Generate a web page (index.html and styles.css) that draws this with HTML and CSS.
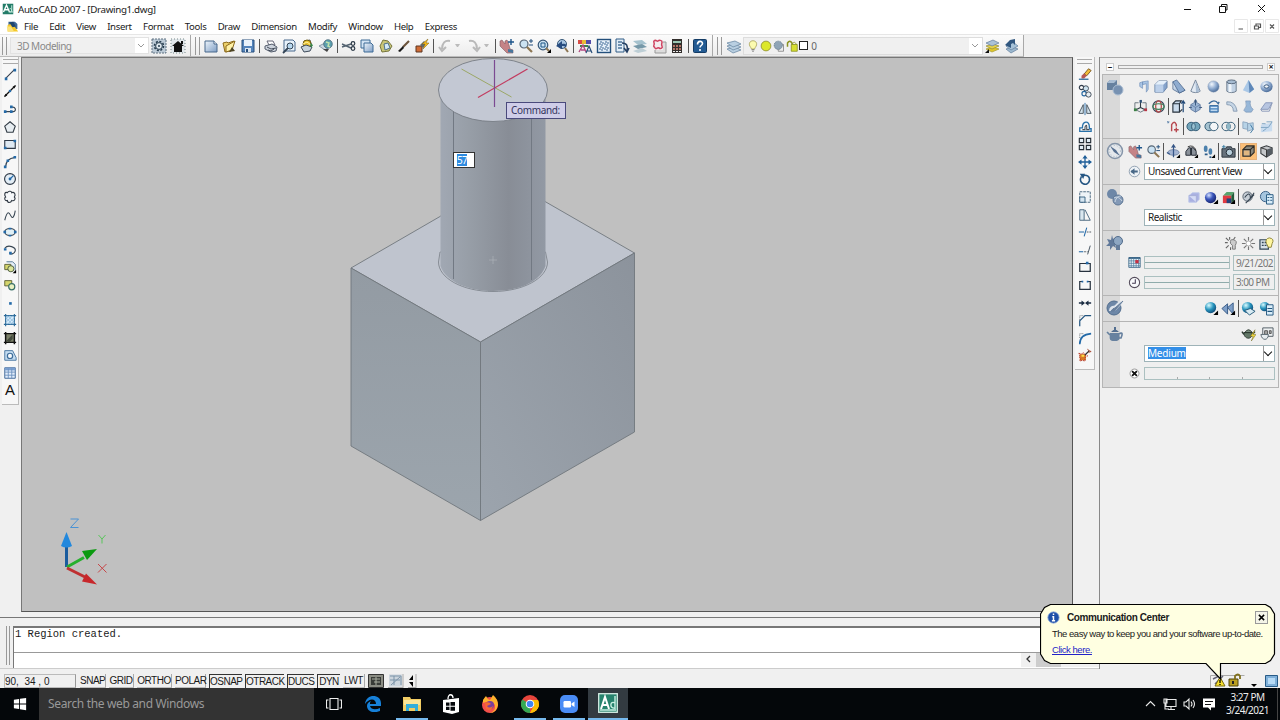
FILE: index.html
```
<!DOCTYPE html>
<html lang="en">
<head>
  <meta charset="UTF-8">
  <meta name="viewport" content="width=device-width, initial-scale=1.0">
  <title>AutoCAD 2007 - [Drawing1.dwg]</title>
  <link rel="stylesheet" href="styles.css">
</head>
<body>

  <!-- icon sprite -->
  <svg class="sprite" xmlns="http://www.w3.org/2000/svg">
    <defs>
      <linearGradient id="g-blue" x1="0" y1="0" x2="1" y2="1"><stop offset="0" stop-color="#eef5fc"/><stop offset="1" stop-color="#7d9dc4"/></linearGradient>
      <radialGradient id="g-ball" cx=".35" cy=".3" r=".8"><stop offset="0" stop-color="#f2f7fd"/><stop offset=".5" stop-color="#8fabd0"/><stop offset="1" stop-color="#3d5f8d"/></radialGradient>
      <radialGradient id="g-deep" cx=".35" cy=".3" r=".8"><stop offset="0" stop-color="#d5e2ff"/><stop offset=".45" stop-color="#3a55bb"/><stop offset="1" stop-color="#101c60"/></radialGradient>
      <radialGradient id="g-cyan" cx=".35" cy=".3" r=".8"><stop offset="0" stop-color="#d8fbff"/><stop offset=".5" stop-color="#2694bd"/><stop offset="1" stop-color="#0d3e6c"/></radialGradient>

      <symbol id="acad" viewBox="0 0 16 16"><rect x="1" y="1" width="14" height="14" fill="#237c68"/><path d="M2 12 6 3l4 9M4 9h5" fill="none" stroke="#fff" stroke-width="1.8"/><path d="M10 8c3-2 4 3 1 4M13 3v9M9 12h6" fill="none" stroke="#c5eddf" stroke-width="1.3"/></symbol>
      <symbol id="dwg" viewBox="0 0 16 16"><path d="M3 2h8l3 3v6H3z" fill="#3e6796"/><path d="m2 6 6-2 3 5 4 5H2z" fill="#f4c82b"/><path d="m4 3 5-1 3 6-4 1z" fill="#1f456f"/><path d="M1 8h5l4 6H2z" fill="#fbe37c"/></symbol>
      <symbol id="gear" viewBox="0 0 16 16"><rect x="1" y="1" width="14" height="14" fill="#bccad6" stroke="#5e7180" stroke-dasharray="2 1"/><circle cx="8" cy="8" r="4.5" fill="none" stroke="#263c4e" stroke-width="1.6" stroke-dasharray="2 1.5"/><circle cx="8" cy="8" r="3.4" fill="#dfe8ee" stroke="#263c4e"/><circle cx="8" cy="8" r="1" fill="#263c4e"/></symbol>
      <symbol id="home" viewBox="0 0 16 16"><rect x="1" y="1" width="14" height="14" fill="#e1e7eb" stroke="#788" stroke-dasharray="1 2"/><path d="m2 8 6-5 6 5h-2v6H4V8z" fill="#111"/><path d="M11 3h2v3h-2z" fill="#111"/></symbol>
      <symbol id="new" viewBox="0 0 16 16"><path d="M2 3h9l3 3v8H2z" fill="url(#g-blue)" stroke="#48688c"/><path d="M11 3v3h3" fill="#fff" stroke="#48688c"/></symbol>
      <symbol id="open" viewBox="0 0 16 16"><path d="m2 5 4-1 1 1 6-2-3 10-6 1z" fill="#ecd06a" stroke="#8c6a1c"/><path d="m5 8 9-5-3 9-6 2z" fill="#fff1a6" stroke="#8c6a1c"/><path d="m8 14 6-1-3-4z" fill="#4d4423"/></symbol>
      <symbol id="save" viewBox="0 0 16 16"><path d="M2 2h12v12H2z" fill="#5484bb" stroke="#274e7c"/><path d="M4 2h8v6H4z" fill="#e8f1fa"/><path d="M5 10h6v4H5z" fill="#dae5f0"/><path d="M6 11h2v3H6z" fill="#274e7c"/></symbol>
      <symbol id="print" viewBox="0 0 16 16"><path d="M4 3h6l2 4H6z" fill="#fff" stroke="#667"/><path d="m2 8 7-2 5 3-1 4-5 1-6-3z" fill="#cdd3dc" stroke="#545d6c"/><path d="m4 9 4 2 5-1M5 12l3 1 3-2" fill="none" stroke="#434c5a"/></symbol>
      <symbol id="preview" viewBox="0 0 16 16"><path d="M3 2h9l2 2v9H3z" fill="#e8f2fb" stroke="#48688c"/><circle cx="9" cy="8" r="3" fill="#b8d8ef" stroke="#345"/><path d="m7 10-5 5" stroke="#345" stroke-width="1.8"/></symbol>
      <symbol id="publish" viewBox="0 0 16 16"><path d="m5 3 6-1 2 6-6 3z" fill="#fff" stroke="#555"/><circle cx="8" cy="6" r="4" fill="#e8c12d" stroke="#735f15"/><path d="m4 6 4-2 4 3" fill="none" stroke="#fff3a8"/><path d="m2 9 5-2 6 2-2 4-6 1z" fill="#c8d3dc" stroke="#3e4b5b"/><path d="m11 5 3 2-2 3z" fill="#35884d"/></symbol>
      <symbol id="globe3" viewBox="0 0 16 16"><path d="m1 8 8-4 5 3-7 5z" fill="#cbd7e2" stroke="#8899a5"/><circle cx="10" cy="6" r="4.3" fill="#5c9fae" stroke="#3d5d70" stroke-width=".7"/><path d="m8 4 3 1-1 3 2 1" stroke="#bfe2ad" stroke-width="1.5" fill="none"/><path d="m5 11 4 3 2-3" fill="#444"/></symbol>
      <symbol id="cut" viewBox="0 0 16 16"><path d="M1 6l9 4M1 9l9-3" stroke="#536270" stroke-width="1.4"/><circle cx="12" cy="5.500" r="1.800" fill="none" stroke="#2b3947" stroke-width="1.2"/><circle cx="12" cy="10.500" r="1.800" fill="none" stroke="#2b3947" stroke-width="1.2"/></symbol>
      <symbol id="copy" viewBox="0 0 16 16"><path d="M2 2h9v8H2z" fill="#d3e4f5" stroke="#3d6b96"/><path d="M5 5h7l2 2v7H5z" fill="url(#g-blue)" stroke="#3d6b96"/></symbol>
      <symbol id="paste" viewBox="0 0 16 16"><path d="m5 2 5 1 4 5-3 5-7 1-2-6z" fill="#c9c576" stroke="#77763c"/><path d="m6 6 4-1 2 5-5 2z" fill="#d4eaf8" stroke="#50718b"/></symbol>
      <symbol id="brush" viewBox="0 0 16 16"><path d="m13 3-6 6" stroke="#6b543c" stroke-width="2.2"/><path d="m7 8 1 2-4 4-2-1z" fill="#181818"/></symbol>
      <symbol id="bolt" viewBox="0 0 16 16"><path d="M2 8h6v6H2z" fill="#d06c36" stroke="#5c3723"/><path d="m6 7 4-4 3 3-4 4z" fill="#62686d"/><path d="m14 1-6 5h3l-2 5 6-6h-3z" fill="#f6b918" stroke="#79601a" stroke-width=".5"/></symbol>
      <symbol id="undo" viewBox="0 0 16 16"><path d="M13 3C8 2 5 5 5 11M2 9l3 4 4-4" fill="none" stroke="#b9b9b9" stroke-width="2"/></symbol>
      <symbol id="redo" viewBox="0 0 16 16"><path d="M3 3c5-1 8 2 8 8m3-2-3 4-4-4" fill="none" stroke="#b9b9b9" stroke-width="2"/></symbol>
      <symbol id="pan" viewBox="0 0 16 16"><path d="M1 3 3 2l3 4V3l2-1 2 5 1 4 3 1v3H8l-4-4-3-3z" fill="#c58386" stroke="#80575e" stroke-width=".6"/><path d="m9 11 5 1v3l-5-1z" fill="#47779d"/><path d="M12 1v6M9 4h6" stroke="#1e558a" stroke-width="1.4"/></symbol>
      <symbol id="zoomrt" viewBox="0 0 16 16"><circle cx="6" cy="6" r="4" fill="#cbe2f2" stroke="#556575" stroke-width="1.2"/><path d="m9 9 5 5" stroke="#8c7653" stroke-width="2.2"/><path d="M13 1v4M11 3h4M11 7h4" stroke="#234f7d"/></symbol>
      <symbol id="zoomwin" viewBox="0 0 16 16"><circle cx="7" cy="7" r="4.800" fill="#cbe2f2" stroke="#365677" stroke-width="1.2"/><path d="M5 5h4v4H5z" fill="none" stroke="#1d5687"/><path d="m10 10 3 3" stroke="#8c7653" stroke-width="2"/><path d="M15 11v4h-4z" fill="#000"/></symbol>
      <symbol id="zoomprev" viewBox="0 0 16 16"><circle cx="8" cy="6" r="4.5" fill="#a9c6e2" stroke="#365677"/><path d="m11 10 3 4" stroke="#8c7653" stroke-width="2"/><path d="M2 8 8 3v3c4-1 5 1 4 4-1-2-2-2-4-2v3z" fill="#274c80"/></symbol>
      <symbol id="props" viewBox="0 0 16 16"><path d="M1 2h4v4H1z" fill="#d84c45"/><path d="M5 2h4v4H5z" fill="#e9bd36"/><path d="M9 2h5v4H9z" fill="#544caa"/><path d="M3 8h8" stroke="#398248" stroke-width="2"/><path d="m2 14 4-7 3 7m-5-2h4" fill="none" stroke="#b24b82" stroke-width="1.4"/><path d="m9 15 3-7 3 7m-5-2h4" fill="none" stroke="#284d78" stroke-width="1.2"/></symbol>
      <symbol id="center" viewBox="0 0 16 16"><rect x="1.5" y="1.5" width="13" height="13" fill="#e8f2fb" stroke="#24507c" stroke-width="1.4"/><path d="M4 4h3v3H4zM9 4h3v3H9zM4 9h3v3H4zM9 9h3v3H9z" fill="none" stroke="#3a6693" stroke-dasharray="2 1"/></symbol>
      <symbol id="palette" viewBox="0 0 16 16"><path d="M2 1h8v13H2z" fill="#e3eef8" stroke="#315c86"/><path d="M4 4h4M4 7h4M4 10h4" stroke="#4d759b" stroke-width="1.6"/><path d="M8 5c5 0 6 3 5 8M10 10l3 4 2-4" fill="none" stroke="#243f62" stroke-width="1.6"/></symbol>
      <symbol id="sheets" viewBox="0 0 16 16"><path d="m1 3 9-1 5 4-9 1z" fill="#a6c2ce"/><path d="m1 8 9-2 5 3-9 2z" fill="#7698a8"/><path d="m1 13 9-3 5 3-9 2z" fill="#bdced5"/></symbol>
      <symbol id="markup" viewBox="0 0 16 16"><path d="M4 4h11v11H4z" fill="#ddd" stroke="#999"/><path d="M2 2h10v10H2z" fill="#f4ebee"/><path d="M3 3c2-2 3 1 4 0s4-1 4 1-1 2 0 4-1 3-3 2-3 2-4 0-2-1-1-3-1-3 0-4" fill="none" stroke="#ce4360" stroke-width="1.5"/></symbol>
      <symbol id="calc" viewBox="0 0 16 16"><rect x="3" y="1" width="10" height="14" fill="#332f2d"/><path d="M4 3h8v2H4z" fill="#9cc7b3"/><path d="M4 8h8M4 11h8" stroke="#dd8a78" stroke-width="1.5" stroke-dasharray="2 1"/><path d="M4 13.5h8" stroke="#eee" stroke-dasharray="2 1"/></symbol>
      <symbol id="help" viewBox="0 0 16 16"><rect x="1.500" y="1.500" width="13" height="13" rx="1" fill="#235b93" stroke="#153c65"/><path d="M5.500 6.500c0-4 5-4 5-1 0 2-2.500 2-2.500 4m0 1.500v2" fill="none" stroke="#fff" stroke-width="1.600"/></symbol>
      <symbol id="layers" viewBox="0 0 16 16"><g fill="#b9cfe1" stroke="#6f8ba6" stroke-width=".8"><path d="m1 11 8-2 6 3-8 3z"/><path d="m1 8 8-2 6 3-8 3z"/><path d="m1 5 8-2 6 3-8 3z"/></g></symbol>
      <symbol id="layermake" viewBox="0 0 16 16"><path d="m2 11 7-2 6 2-7 3z" fill="#dfc52a" stroke="#a39932" stroke-width=".7"/><path d="m2 8 7-2 6 2-7 3z" fill="#e6d24a" stroke="#8f8a3a" stroke-width=".7"/><path d="m2 5 7-3 6 3-7 3z" fill="#aac1d7" stroke="#617d9c" stroke-width=".7"/><path d="m1 15 4-4v4z" fill="#111"/></symbol>
      <symbol id="layerprev" viewBox="0 0 16 16"><path d="m3 11 7-2 5 2-7 4z" fill="#9cb9cf" stroke="#617d9c" stroke-width=".7"/><path d="m3 8 7-4 5 4-7 4z" fill="#a6c2d8" stroke="#617d9c" stroke-width=".7"/><path d="m2 7 5-5 5-1v6l-2-2-2 1v4z" fill="#31577f"/></symbol>
      <symbol id="bulb" viewBox="0 0 16 16"><path d="M5 10C1 5 4 1 8 1s7 4 3 9l-1 2H6z" fill="#fcfbb0" stroke="#a19b50"/><path d="M6 13h4M7 15h2" stroke="#555"/></symbol>
      <symbol id="sun" viewBox="0 0 16 16"><circle cx="8" cy="8" r="6.500" fill="#dce72b" stroke="#858428"/></symbol>
      <symbol id="freeze" viewBox="0 0 16 16"><path d="M7 6h7v9H7z" fill="#eee" stroke="#777"/><circle cx="7" cy="7" r="5.500" fill="#8fa4b6" stroke="#5e7487" stroke-dasharray="2 1"/></symbol>
      <symbol id="lock" viewBox="0 0 16 16"><path d="M2 9V4q3-5 6 0v2" fill="none" stroke="#8b9321" stroke-width="2"/><path d="M7 6h8v9H7z" fill="#d7df31" stroke="#818a18"/><path d="M8 6q3-6 6 0" fill="none" stroke="#8b9321"/></symbol>

      <!-- draw -->
      <symbol id="line" viewBox="0 0 16 16"><path d="M3 13 13 3" stroke="#333d4c" stroke-width="1.3"/><path d="M2 12h3v3H2zM12 2h3v3h-3z" fill="#246aa8"/></symbol>
      <symbol id="xline" viewBox="0 0 16 16"><path d="M2 14 14 2" stroke="#111" stroke-width="1.4"/><path d="m1 15 2-4 2 2zM15 1l-2 4-2-2z" fill="#111"/><circle cx="8" cy="8" r="1.5" fill="#246aa8"/></symbol>
      <symbol id="pline" viewBox="0 0 16 16"><path d="M3 11h9c4-1 2-6-2-5" fill="none" stroke="#384653" stroke-width="1.3"/><path d="M1 9.500h3v3H1zM8 9.500h3v3H8zM8 4h3v3H8z" fill="#246aa8"/></symbol>
      <symbol id="polygon" viewBox="0 0 16 16"><path d="m8 2 6 5-2.500 7h-7L2 7z" fill="#e7edf1" stroke="#333c46" stroke-width="1.3"/></symbol>
      <symbol id="rect" viewBox="0 0 16 16"><path d="M2 4h12v9H2z" fill="#dfe9f2" stroke="#303b48" stroke-width="1.3"/><path d="M1 11h3v3H1zM12 3h3v3h-3z" fill="#246aa8"/></symbol>
      <symbol id="arc" viewBox="0 0 16 16"><path d="M3 13Q4 4 13 3" fill="none" stroke="#384653" stroke-width="1.3"/><path d="M1 12h3v3H1zM4 5h3v3H4zM12 1h3v3h-3z" fill="#246aa8"/></symbol>
      <symbol id="circle" viewBox="0 0 16 16"><circle cx="8" cy="8" r="6.200" fill="#e3edf5" stroke="#303b48" stroke-width="1.3"/><path d="m8 8 4-4" stroke="#246aa8" stroke-width="1.3"/><circle cx="8" cy="8" r="1.600" fill="#246aa8"/></symbol>
      <symbol id="cloud" viewBox="0 0 16 16"><path d="M5 3c2-3 5-1 5 0 3-1 5 2 3 5 2 2 0 5-3 4-1 3-5 3-5 0-3 1-4-3-2-4-2-3-1-6 2-5z" fill="#f6f8fa" stroke="#333c46" stroke-width="1.3"/></symbol>
      <symbol id="spline" viewBox="0 0 16 16"><path d="M2 14C5 2 7 5 9 9s4 1 5-6" fill="none" stroke="#384653" stroke-width="1.2"/></symbol>
      <symbol id="ellipse" viewBox="0 0 16 16"><ellipse cx="8" cy="8" rx="6" ry="4" fill="#e1f0f6" stroke="#333c46" stroke-width="1.3"/><path d="M.5 6.500h3v3h-3zM12.500 6.500h3v3h-3zM6.500 3h3v2h-3zM6.500 11h3v2h-3z" fill="#246aa8"/></symbol>
      <symbol id="earc" viewBox="0 0 16 16"><path d="M2 6c4-5 13-1 12 3-1 4-6 4-6 3" fill="none" stroke="#384653" stroke-width="1.3"/><path d="M1 6h3v2.500H1zM7 10h3v3H7z" fill="#246aa8"/></symbol>
      <symbol id="insblock" viewBox="0 0 16 16"><path d="M4 2h7l3 3v7" fill="#e4eef7" stroke="#4d718e"/><path d="M2 5h7v6H2z" fill="#d5d66e" stroke="#575a2f"/><circle cx="9" cy="10" r="3.500" fill="#dbe59a" stroke="#425236"/><path d="M15 11v4h-4z" fill="#000"/></symbol>
      <symbol id="mkblock" viewBox="0 0 16 16"><path d="M2 3h8v6H2z" fill="#d5d66e" stroke="#575a2f"/><circle cx="10" cy="10" r="3.500" fill="#eaf1c2" stroke="#386f67" stroke-width="1.3"/></symbol>
      <symbol id="point" viewBox="0 0 16 16"><path d="M7 7h3v3H7z" fill="#246aa8"/></symbol>
      <symbol id="hatch" viewBox="0 0 16 16"><path d="M3 3h10v10H3z" fill="#d7ecfb"/><path d="M3 1v14M13 1v14M1 3h14M1 13h14" stroke="#2d6b9a" stroke-width="1.300"/><path d="M3 7l4-4M3 11l8-8M5 13l8-8M9 13l4-4M5 3l8 8M3 5l8 8" stroke="#7fb0d5" stroke-width=".8"/></symbol>
      <symbol id="gradient" viewBox="0 0 16 16"><path d="M3 3h10v10H3z" fill="#7b8069"/><path d="M3 1v14M13 1v14M1 3h14M1 13h14" stroke="#111" stroke-width="1.700"/><path d="m4 11 7-7v5l-4 4z" fill="#444b3d"/></symbol>
      <symbol id="region" viewBox="0 0 16 16"><path d="M2 3h9l4 8v3H2z" fill="#c4dcf0" stroke="#3e6e9b"/><circle cx="8" cy="9" r="3" fill="#f7fafc" stroke="#3e6e9b" stroke-width="1.400"/></symbol>
      <symbol id="table" viewBox="0 0 16 16"><path d="M2 2h12v12H2z" fill="#e3eefb" stroke="#315c8f"/><path d="M2 3.500h12" stroke="#7a9fd0" stroke-width="3"/><path d="M6 3v11M10 3v11M2 7h12M2 10.500h12" stroke="#6b90bd"/></symbol>
      <symbol id="mtext" viewBox="0 0 16 16"><text x="8" y="14" text-anchor="middle" font-family="Liberation Sans, sans-serif" font-size="17" fill="#111">A</text></symbol>

      <!-- modify -->
      <symbol id="erase" viewBox="0 0 16 16"><path d="m7 8 5-6 3 2-5 6z" fill="#f2bd38" stroke="#72511c"/><path d="m4 10 3-3 3 3-3 3H4z" fill="#b95852"/><path d="M1 14h11" stroke="#326e9c" stroke-width="1.5"/></symbol>
      <symbol id="mcopy" viewBox="0 0 16 16"><circle cx="4" cy="4" r="2.500" fill="none" stroke="#333f4d" stroke-width="1.3"/><circle cx="9" cy="5" r="3" fill="#cee3ef" stroke="#333f4d"/><circle cx="7" cy="11" r="2.500" fill="none" stroke="#2467a0" stroke-width="1.3"/><circle cx="12" cy="12" r="3" fill="#e6eef3" stroke="#333f4d"/></symbol>
      <symbol id="mirror" viewBox="0 0 16 16"><path d="M6 3v10H1zM10 3v10h5z" fill="#d7e6ef" stroke="#3d4a56"/><path d="M8 1v14" stroke="#246aa8"/></symbol>
      <symbol id="offset" viewBox="0 0 16 16"><path d="M2 13V9h3c0-8 8-9 8-1v2h2v3z" fill="none" stroke="#2871a9" stroke-width="1.5"/><path d="M5 11h3V8q2-4 2 0v3h3" fill="none" stroke="#424e58" stroke-width="1.2"/></symbol>
      <symbol id="array" viewBox="0 0 16 16"><path d="M1.500 1.500h5v5h-5zM9.500 1.500h5v5h-5zM1.500 9.500h5v5h-5zM9.500 9.500h5v5h-5z" fill="#e3eef6" stroke="#222b34" stroke-width="1.3"/></symbol>
      <symbol id="move" viewBox="0 0 16 16"><path d="M8 2v12M2 8h12" stroke="#205f99" stroke-width="1.5"/><path d="m8 0 3 4H5zM8 16l3-4H5zM0 8l4-3v6zM16 8l-4-3v6z" fill="#205f99"/></symbol>
      <symbol id="rotate" viewBox="0 0 16 16"><path d="M4 5c-5 8 7 13 9 5 1-5-3-7-7-6" fill="none" stroke="#245582" stroke-width="1.8"/><path d="M2 2h6L6 8z" fill="#245582"/></symbol>
      <symbol id="scale" viewBox="0 0 16 16"><path d="M2 2h12v12H2z" fill="#eef3f7" stroke="#3b5b76" stroke-dasharray="3 1"/><path d="M2 8h6v6H2z" fill="#d5e5f0" stroke="#2e597a"/></symbol>
      <symbol id="stretch" viewBox="0 0 16 16"><path d="M2 2h5v12H2z" fill="#dae7ef" stroke="#3b5b76"/><path d="m8 2 6 12H7" fill="none" stroke="#3b5b76"/></symbol>
      <symbol id="trim" viewBox="0 0 16 16"><path d="M1 8h6M10 3 7 13" stroke="#246aa8" stroke-width="1.2"/><path d="M10 8h5" stroke="#404953" stroke-dasharray="2 1"/></symbol>
      <symbol id="extend" viewBox="0 0 16 16"><path d="M1 10h5" stroke="#246aa8" stroke-width="1.2"/><path d="M7 10h4" stroke="#404953" stroke-dasharray="2 1"/><path d="m14 3-3 10" stroke="#334250"/></symbol>
      <symbol id="breakpt" viewBox="0 0 16 16"><path d="M2 4h12v9H2z" fill="#f6f6f6" stroke="#27323f" stroke-width="1.4"/><path d="M9 2h3v3H9z" fill="#246aa8"/></symbol>
      <symbol id="break" viewBox="0 0 16 16"><path d="M5 4H2v9h12V4h-3" fill="none" stroke="#27323f" stroke-width="1.4"/><path d="M4 3h2v2H4zM10 3h2v2h-2z" fill="#246aa8"/></symbol>
      <symbol id="join" viewBox="0 0 16 16"><path d="M1 8h5M10 8h5" stroke="#1b2d43" stroke-width="1.5"/><path d="m8 8-4-3v6zM8 8l4-3v6z" fill="#1b2d43"/></symbol>
      <symbol id="chamfer" viewBox="0 0 16 16"><path d="M2 15V9l6-6h7" fill="none" stroke="#245680" stroke-width="1.4"/><path d="M2 8V3h5" fill="none" stroke="#59636c" stroke-dasharray="1 1"/></symbol>
      <symbol id="fillet" viewBox="0 0 16 16"><path d="M2 15Q2 4 15 3" fill="none" stroke="#246aa8" stroke-width="1.8"/><path d="M2 8V3h5" fill="none" stroke="#59636c" stroke-dasharray="1 1"/></symbol>
      <symbol id="explode" viewBox="0 0 16 16"><path d="M2 7h7v7H2z" fill="#d77a28"/><path d="m1 6 3 1 2-2 2 3 3 1-3 2v4l-3-1-3 1 1-3-2-2 1-1z" fill="none" stroke="#b5301f" stroke-dasharray="2 1"/><path d="M8 8 13 3" stroke="#333" stroke-width="1.500"/><path d="m11 1 1 2 3 1-3 1" stroke="#a3442c" fill="none"/><path d="M4 8h3v2H4z" fill="#fae345"/></symbol>

      <!-- dashboard -->
      <symbol id="p-solid" viewBox="0 0 18 18"><path d="M1 5 4 2h7v7l-3 3H1z" fill="#65809f"/><path d="m1 5 3-3h7L8 5z" fill="#a9bdd3"/><circle cx="12" cy="12" r="5" fill="#7791b1" stroke="#a9bcd2"/></symbol>
      <symbol id="p-nav" viewBox="0 0 18 18"><circle cx="9" cy="9" r="7.500" fill="#e4e8ec" stroke="#8494a8" stroke-width="1.500"/><circle cx="9" cy="9" r="5.500" fill="none" stroke="#acb8c6" stroke-dasharray="1 2"/><path d="m4 4 6 4 4 6-6-4z" fill="#566f90"/></symbol>
      <symbol id="p-style" viewBox="0 0 18 18"><circle cx="6" cy="6" r="5" fill="#6d87a7"/><circle cx="12" cy="12" r="5" fill="#8399b6" stroke="#5c7594"/><path d="M8 10c3-2 6 0 8 3M9 14c1-5 4-6 6-6" fill="none" stroke="#cdd9e5"/></symbol>
      <symbol id="p-light" viewBox="0 0 18 18"><path d="m6 1 1 4 4-2-2 4 3 2-3 1 1 4-3-2-3 4V12L0 12l3-3-2-4 4 1z" fill="#61799a"/><circle cx="12" cy="7" r="4.500" fill="#8da6c2" stroke="#526c8c"/><path d="M10 11h4v5h-4z" fill="#647c9b"/></symbol>
      <symbol id="p-mat" viewBox="0 0 18 18"><circle cx="8" cy="9" r="7" fill="#6d87a7" stroke="#516d8e"/><path d="M5 12q0-4 4-3l6-6" fill="none" stroke="#dce3eb" stroke-width="4"/><path d="M17 2 10 10q-2 3-5 2 2-3 4-3z" fill="#667e9c" stroke="#667e9c"/></symbol>
      <symbol id="p-render" viewBox="0 0 18 18"><path d="M4 8h9c2 8-1 8-5 8S3 15 4 8" fill="#67819f"/><path d="M5 7q4-5 8 0zM8 2h2v3H8z" fill="#536e90"/><path d="M4 10 1 7M13 9q5-3 2 4h-2" fill="none" stroke="#67819f" stroke-width="1.700"/></symbol>
      <symbol id="polysolid" viewBox="0 0 16 16"><path d="m4 4 3-1v7l-3-2zM7 3l6-1v9l-2 3V5L7 6z" fill="#a9c5e5" stroke="#7190b8" stroke-width=".700"/></symbol>
      <symbol id="box" viewBox="0 0 16 16"><path d="m2 6 4-4h9v7l-4 5H2z" fill="#86a4cc" stroke="#5a769b" stroke-width=".8"/><path d="m2 6 4-4h9l-4 4z" fill="#e5f0fb"/><path d="M2.500 6.500H11V14H2.500z" fill="#bcd0ea"/></symbol>
      <symbol id="wedge" viewBox="0 0 16 16"><path d="M2 3v8l7 4 6-3z" fill="url(#g-blue)" stroke="#4a668b" stroke-width=".8"/><path d="m2 3 4-2 9 11-6 3z" fill="#8facd0" stroke="#4a668b" stroke-width=".8"/></symbol>
      <symbol id="cone" viewBox="0 0 16 16"><path d="m8 1 5 12c-2 2-8 2-10 0z" fill="#e2eaf3" stroke="#66788e" stroke-width=".9"/><path d="m8 2 4.500 11q-2 1-4 1z" fill="#a9bdd3"/></symbol>
      <symbol id="sphere" viewBox="0 0 16 16"><circle cx="8" cy="8" r="6" fill="url(#g-ball)" stroke="#8296b2" stroke-width=".500"/></symbol>
      <symbol id="cyl" viewBox="0 0 16 16"><path d="M3 3v10c2 2 8 2 10 0V3z" fill="#c2d2e4" stroke="#5e6e81" stroke-width=".9"/><path d="M5 5h3v9H5z" fill="#eef4fa"/><ellipse cx="8" cy="3" rx="5" ry="2" fill="#a7bcd2" stroke="#4e5e71" stroke-width=".9"/></symbol>
      <symbol id="pyramid" viewBox="0 0 16 16"><path d="m8 1-6 11 7 3 5-4z" fill="#aac8e7"/><path d="m8 1 1 14 5-4z" fill="#5e87b8"/></symbol>
      <symbol id="torus" viewBox="0 0 16 16"><ellipse cx="8" cy="8" rx="6.500" ry="6" fill="url(#g-ball)"/><ellipse cx="8" cy="8" rx="2.500" ry="1.800" fill="#eef2f7" stroke="#38577e"/></symbol>
      <symbol id="orbitaxis" viewBox="0 0 16 16"><path d="M8 2v7M8 9l-6 3M8 9l6 3" stroke="#303d48" stroke-width="1.200"/><path d="M6 4H2v7l6 3 6-3V4h-4" fill="none" stroke="#5b6872" stroke-width=".900"/><path d="M7 1h2.500v3H7z" fill="#2c5178"/><path d="M1 10h3v3H1z" fill="#3b8145"/><path d="M12 10h3v3h-3z" fill="#b73746"/></symbol>
      <symbol id="orbit3" viewBox="0 0 16 16"><circle cx="8" cy="8" r="6" fill="none" stroke="#38475c" stroke-width="1.200"/><ellipse cx="8" cy="8" rx="3" ry="6" fill="none" stroke="#bb4745" stroke-width="1.300"/><ellipse cx="8" cy="8" rx="6" ry="3" fill="none" stroke="#3e8357" stroke-width="1.200"/></symbol>
      <symbol id="extrude" viewBox="0 0 16 16"><path d="M2 5h7v9H2zM2 5l3-3h6L9 5M9 14l3-3" fill="#cbdced" stroke="#28323d" stroke-width="1.200"/><path d="M13 14V2m-2 3 2-3 2 3" fill="none" stroke="#244b79" stroke-width="1.300"/></symbol>
      <symbol id="presspull" viewBox="0 0 16 16"><path d="m3 6 5-3 5 3v5l-5 3-5-3z" fill="#9bb5d4" stroke="#6780a3"/><path d="m3 6 5 3 5-3M8 9v5" stroke="#5d7aa2" stroke-width=".8" fill="none"/><path d="M8 1v6M1 9h3M12 9h3" stroke="#36547b"/><path d="m8 0 2 3H6z" fill="#36547b"/></symbol>
      <symbol id="revolve" viewBox="0 0 16 16"><path d="M4 7h9v7H4z" fill="#669acc" stroke="#31659b"/><path d="M3 5q6-6 10 0l1-2" fill="none" stroke="#39699a" stroke-width="1.500"/><path d="M5 9h7M5 12h7" stroke="#e2f1fe"/></symbol>
      <symbol id="sweep" viewBox="0 0 16 16"><path d="M3 3q9-1 11 10h-4Q10 6 3 6z" fill="#c6d6e6" stroke="#8a9db3"/></symbol>
      <symbol id="loft" viewBox="0 0 16 16"><path d="M5 2h5q-1 6 3 9l-2 3H5l-2-2q4-4 2-10" fill="#97b7d8" stroke="#6d8aae" stroke-width=".6"/></symbol>
      <symbol id="planar" viewBox="0 0 16 16"><path d="m2 11 5-7h7l-4 7z" fill="#b7c5e0" stroke="#8797bb"/><path d="m2 11 1 2h8l3-9" fill="none" stroke="#8c9aba"/></symbol>
      <symbol id="helix" viewBox="0 0 16 16"><path d="M6 13V6q3-5 5 0v2M11 9v5M8.500 11.500h5" fill="none" stroke="#b7484f" stroke-width="1.500"/><path d="M1 2l3 1-2 2z" fill="#5b80a9"/></symbol>
      <symbol id="union" viewBox="0 0 16 16"><circle cx="5.500" cy="8" r="4.500" fill="#72a5bb" stroke="#2f5772"/><circle cx="10.500" cy="8" r="4.500" fill="#72a5bb" stroke="#2f5772"/><ellipse cx="8" cy="8" rx="2" ry="3.500" fill="#9cc3d3" stroke="#2f5772" stroke-width=".8"/></symbol>
      <symbol id="subtract" viewBox="0 0 16 16"><circle cx="5.500" cy="8" r="4.500" fill="#a5c2d0" stroke="#2f5772"/><circle cx="10.500" cy="8" r="4.500" fill="#f4f6f8" stroke="#2f5772"/></symbol>
      <symbol id="intersect" viewBox="0 0 16 16"><circle cx="5.500" cy="8" r="4.500" fill="none" stroke="#2f5772"/><circle cx="10.500" cy="8" r="4.500" fill="none" stroke="#2f5772"/><ellipse cx="8" cy="8" rx="2" ry="3.500" fill="#8fb8c8"/></symbol>
      <symbol id="slice" viewBox="0 0 16 16"><path d="m2 3 5 1v7l-5-1zM7 5l6-1v7l-6 2z" fill="#b7d3e7" stroke="#8ea7c0"/><path d="m10 6 3 5-3 4" fill="none" stroke="#417aa3"/></symbol>
      <symbol id="thicken" viewBox="0 0 16 16"><path d="m2 6 12-2v9L2 14z" fill="#c9dcef"/><path d="M2 9h8l4-6M4 13l4-3M8 3h6M3 5h4" fill="none" stroke="#7da3c1"/></symbol>
      <symbol id="orbit" viewBox="0 0 16 16"><ellipse cx="8" cy="9" rx="6" ry="3" fill="#a3b4d2" stroke="#7486a6"/><path d="M8 1v13M6 4l2-3 2 3M4 11l-3-2" fill="none" stroke="#365687" stroke-width="1.300"/><path d="M15 11v4h-4z"/></symbol>
      <symbol id="swivel" viewBox="0 0 16 16"><path d="M2 12V8l3-4h2v8zM8 4h2l3 4v4H8z" fill="#8a919a" stroke="#232a34"/><path d="M4 3q6-3 9 4" fill="none" stroke="#333"/><path d="M15 11v4h-4z"/></symbol>
      <symbol id="walk" viewBox="0 0 16 16"><ellipse cx="5" cy="5" rx="2" ry="3.500" fill="#4c81ad"/><ellipse cx="10" cy="8" rx="2" ry="3.500" fill="#4c81ad"/><path d="M4 10h3v2H4zM9 13h2v2H9z" fill="#2b5b89"/><path d="M15 11v4h-4z"/></symbol>
      <symbol id="camera" viewBox="0 0 16 16"><path d="M1 5h4l1-2h5l1 2h3v9H1z" fill="#66717c" stroke="#28313a"/><circle cx="9" cy="9" r="3.500" fill="#b8cedb" stroke="#1e2932"/><path d="M3 1v4M1 3h4" stroke="#32799f"/></symbol>
      <symbol id="parallel" viewBox="0 0 16 16"><path d="M2 6h8v7H2zM2 6l4-4h8v7l-4 4M10 6l4-4" fill="#87857b" stroke="#302d27" stroke-width="1.200"/><path d="M3 7h6v5H3z" fill="#e0b680"/></symbol>
      <symbol id="persp" viewBox="0 0 16 16"><path d="m2 4 6-2 6 2v6l-6 4-6-4z" fill="#c4c7ca" stroke="#34383c" stroke-width="1.100"/><path d="m8 6 6-2v6l-6 4z" fill="#555c63"/><path d="m2 4 6 2v8" fill="none" stroke="#333"/></symbol>
      <symbol id="back" viewBox="0 0 16 16"><circle cx="8" cy="8" r="6.500" fill="#eef2f6" stroke="#8093a5"/><path d="M4 8h8" stroke="#496887" stroke-width="2.500"/><path d="m3 8 5-4v8z" fill="#496887"/></symbol>
      <symbol id="xray" viewBox="0 0 16 16"><path d="m3 6 4-3h7v7l-3 3H3z" fill="#a9b0e1" stroke="#bcc7ea"/><path d="M3 6h8v7" fill="#d5dcf5" stroke="#a6afd6"/></symbol>
      <symbol id="realball" viewBox="0 0 16 16"><circle cx="7" cy="8" r="6" fill="url(#g-deep)"/><path d="M15 10v5h-5z"/></symbol>
      <symbol id="facecol" viewBox="0 0 16 16"><path d="m2 6 4-4h8l-3 4z" fill="#56a36d"/><path d="M2 6h9v8H2z" fill="#df3941"/><path d="m11 6 3-4v9l-3 3z" fill="#215b38"/><path d="M6 9h5v5H6z" fill="#23437a"/><path d="M15 10v5h-5z"/></symbol>
      <symbol id="edges" viewBox="0 0 16 16"><circle cx="7" cy="7" r="5" fill="#c5cdd5" stroke="#535e6b"/><path d="M4 8q6-8 6 1L14 3M5 14l9-9" fill="none" stroke="#34424f" stroke-width="1.200"/></symbol>
      <symbol id="vsman" viewBox="0 0 16 16"><circle cx="7" cy="7" r="5.500" fill="#a5c5de" stroke="#365d83"/><path d="M8 5h7v10H8z" fill="#d9edf9" stroke="#24587f"/><path d="M9 8h5M9 11h5" stroke="#24587f" stroke-dasharray="2 1"/></symbol>
      <symbol id="lightoff" viewBox="0 0 16 16"><path d="m2 2 3 3M6 1v3M1 7h3M2 13l3-3M7 12v3M12 1l-2 3" stroke="#666" stroke-width="1.200"/><path d="M7 8q-1-5 3-4 5 1 2 6v4H9v-4z" fill="#ccc" stroke="#777"/></symbol>
      <symbol id="sunoff" viewBox="0 0 16 16"><path d="M8 1v4M8 11v4M1 8h4M11 8h4M3 3l3 3M10 10l3 3M13 3l-3 3M6 10l-3 3" stroke="#777" stroke-width="1.200"/><circle cx="8" cy="8" r="2.500" fill="#fff" stroke="#bbb"/></symbol>
      <symbol id="lightlist" viewBox="0 0 16 16"><path d="M1 4h9v10H1z" fill="#d9e2e8" stroke="#334655" stroke-width="1.300"/><path d="M3 7h5M3 10h5" stroke="#334655" stroke-width="1.500" stroke-dasharray="2 1"/><path d="M8 8q-2-5 3-6 6 1 3 6l-1 4h-3z" fill="#fff6a0" stroke="#8d8235"/></symbol>
      <symbol id="calendar" viewBox="0 0 16 16"><path d="M1 2h14v12H1z" fill="#eef6fb" stroke="#315e80"/><path d="M1 2.500h14" stroke="#315e80" stroke-width="2"/><path d="M4 2v12M7 2v12M10 2v12M13 2v12M1 6h14M1 9h14M1 12h14" stroke="#4d7c9e" stroke-width=".9"/><path d="M9 5h4v4H9z" fill="#c72e40"/></symbol>
      <symbol id="clock" viewBox="0 0 16 16"><circle cx="8" cy="8" r="6.300" fill="#f8f9fb" stroke="#554d5c" stroke-width="1.300"/><path d="M9 4v5H5" fill="none" stroke="#443b52" stroke-width="1.300"/></symbol>
      <symbol id="matball" viewBox="0 0 16 16"><circle cx="7" cy="7" r="6" fill="url(#g-cyan)"/><path d="M15 10v5h-5z"/></symbol>
      <symbol id="matmap" viewBox="0 0 16 16"><path d="m1 8 6-5v11zM7 7l6-5v12z" fill="#7e9fc8" stroke="#375a85"/><path d="M15 10v5h-5z"/></symbol>
      <symbol id="matlayer" viewBox="0 0 16 16"><circle cx="7" cy="7" r="6" fill="url(#g-cyan)"/><path d="m4 10 6-2 5 3-6 4z" fill="#d8ebf3" stroke="#255a7b"/></symbol>
      <symbol id="matlist" viewBox="0 0 16 16"><circle cx="6" cy="6" r="5" fill="url(#g-cyan)"/><path d="M8 4h7v11H8z" fill="#d9edf9" stroke="#24587f"/><path d="M9 8h5M9 11h5" stroke="#24587f" stroke-width="1.300"/></symbol>
      <symbol id="teapot" viewBox="0 0 16 16"><path d="M3 7h9c1 8-9 8-9 0" fill="#627767" stroke="#29352d"/><path d="M4 7q4-6 8 0z" fill="#7b8f80" stroke="#29352d"/><path d="M3 9 1 6M12 9l3-3" fill="none" stroke="#29352d" stroke-width="1.500"/><path d="m15 4-5 7h3l-2 5 5-7h-3z" fill="#f4db3c" stroke="#6c621e" stroke-width=".500"/></symbol>
      <symbol id="rframe" viewBox="0 0 16 16"><path d="M4 2h11v9H4z" fill="#edf0f1" stroke="#515b63"/><path d="M6 5h3v4H6zM11 5h2v3h-2z" stroke="#555" fill="#aaa"/><path d="M2 9h8c0 7-7 7-8 0" fill="#e8edf0" stroke="#596771"/></symbol>
      <symbol id="stop" viewBox="0 0 16 16"><circle cx="8" cy="8" r="5.500" fill="#fff" stroke="#888"/><path d="m5 5 6 6M11 5l-6 6" stroke="#111" stroke-width="2.200"/></symbol>

      <symbol id="info" viewBox="0 0 16 16"><circle cx="8" cy="8" r="7" fill="#1e50a8" stroke="#9ab4df"/><path d="M8 3v2M6.500 7H8v5M6 12h4" stroke="#fff" stroke-width="1.800" fill="none"/></symbol>

      <!-- taskbar -->
      <symbol id="win" viewBox="0 0 16 16"><path d="m1 3.200 6-1v5.300H1zM8 2l7-1v6.500H8zM1 8.500h6v5.300l-6-1zM8 8.500h7V15l-7-1z" fill="#fff"/></symbol>
      <symbol id="taskview" viewBox="0 0 16 16"><path d="M4 2.500h8v11H4zM2.500 4H.5v8h2M13.500 4h2v8h-2" fill="none" stroke="#eee" stroke-width="1.100"/></symbol>
      <symbol id="edge" viewBox="0 0 16 16"><path d="M0 8C1-3 16-2 16 7v3H5c1 4 6 4 10 2v3C8 18 2 15 2 10c0-3 2-4 4-5-1 1-1 2-1 3h6c0-6-7-6-11 0z" fill="#1680d8"/></symbol>
      <symbol id="folder" viewBox="0 0 18 16"><path d="M0 1h7l1 2h10v12H0z" fill="#f2cd64"/><path d="M1 4h16v5H1z" fill="#fbe59a"/><path d="M3 8h12v7h-3v-3H6v3H3z" fill="#34aedb"/></symbol>
      <symbol id="store" viewBox="0 0 18 20"><path d="M1 6l16-2v14l-7 2-9-2z" fill="#fff"/><path d="M6 5c0-6 5-5 5-1" fill="none" stroke="#fff" stroke-width="1.300"/><path d="M4 8.500h3.500v3.300H4zM8.500 8h4.500v3.800H8.500zM4 12.800h3.500V16H4zM8.500 12.800h4.500v4H8.500z" fill="#05080c"/></symbol>
      <symbol id="firefox" viewBox="0 0 18 18"><circle cx="9" cy="10" r="8" fill="#f3504a"/><path d="M2 5q2-3 3-4 1 3 4 4l3-5q5 4 5 10-2 8-8 8 6-2 5-8Q10 4 2 8z" fill="#ffb22d"/><circle cx="9" cy="10" r="4" fill="#7b3f9e"/><path d="M4 8q4-2 6 1l-4 2q2 3 6 0-2 6-7 3" fill="#f56a35"/></symbol>
      <symbol id="chrome" viewBox="0 0 18 18"><circle cx="9" cy="9" r="9" fill="#e8453c"/><path d="M9 9 1.200 4.500A9 9 0 0 0 9 18z" fill="#35a853"/><path d="M9 9h9a9 9 0 0 1-9 9l4-7z" fill="#fbbd05"/><path d="M9 5h8a9 9 0 0 1-8 13l4-7z" fill="#fbbd05"/><circle cx="9" cy="9" r="4.300" fill="#fff"/><circle cx="9" cy="9" r="3.300" fill="#4285f4"/></symbol>
      <symbol id="zoomapp" viewBox="0 0 18 18"><rect width="18" height="18" rx="5" fill="#4a8cf5"/><rect x="3.500" y="6" width="7.500" height="6.500" rx="1.200" fill="#fff"/><path d="m11.500 8.500 3-2v5.500l-3-2z" fill="#fff"/></symbol>
      <symbol id="acadbig" viewBox="0 0 20 20"><rect x=".7" y=".7" width="18.600" height="18.600" fill="#26836d" stroke="#d6eee5" stroke-width="1.300"/><path d="m3 16 4-12 4 12M5 12h5" fill="none" stroke="#fff" stroke-width="2"/><path d="M17 3v13M17 10c-5-3-6 6 0 5M2 17h16" fill="none" stroke="#c9efe2" stroke-width="1.400"/></symbol>
    </defs>
  </svg>

  <div class="titlebar">
    <svg class="app-icon"><use href="#acad"/></svg>
    <span class="title">AutoCAD 2007 - [Drawing1.dwg]</span>
    <svg class="win-buttons" viewBox="0 0 100 18"><path d="M4 9.500h7M39.500 6.500h6v6h-6zM41.500 6V4.500H47V10h-1.500M78 5l7 7M85 5l-7 7" fill="none" stroke="#111"/></svg>
  </div>

  <div class="menubar">
    <svg class="doc-icon"><use href="#dwg"/></svg>
    <nav class="menu">
      <span>File</span><span>Edit</span><span>View</span><span>Insert</span><span>Format</span><span>Tools</span><span>Draw</span><span>Dimension</span><span>Modify</span><span>Window</span><span>Help</span><span>Express</span>
    </nav>
    <svg class="mdi-buttons" viewBox="0 0 46 14"><path d="M.5.500h13v13H.5zM16.500.500h13v13h-13zM31.500.500h13v13h-13z" fill="#fff" stroke="#e8e8e8"/><path d="M4.500 10h4.500M20.500 7h4v3h-4zM22 6.500V5h4.500v3.500H25M36 5.500l4 4M40 5.500l-4 4" fill="none" stroke="#555" stroke-width="1.200"/></svg>
  </div>

  <!-- toolbars under the menu -->
  <div class="toolbars">
    <div class="bar bar-workspace">
      <i class="grip"></i>
      <div class="ws-select"><span>3D Modeling</span><svg class="chev" viewBox="0 0 8 6"><path d="m1 1 3 3 3-3" fill="none" stroke="#999"/></svg></div>
      <svg class="ico"><use href="#gear"/></svg><svg class="ico"><use href="#home"/></svg>
    </div>
    <div class="bar bar-standard">
      <i class="grip"></i>
      <svg class="ico"><use href="#new"/></svg><svg class="ico"><use href="#open"/></svg><svg class="ico"><use href="#save"/></svg>
      <i class="sep"></i>
      <svg class="ico"><use href="#print"/></svg><svg class="ico"><use href="#preview"/></svg><svg class="ico"><use href="#publish"/></svg><svg class="ico"><use href="#globe3"/></svg>
      <i class="sep"></i>
      <svg class="ico"><use href="#cut"/></svg><svg class="ico"><use href="#copy"/></svg><svg class="ico"><use href="#paste"/></svg><svg class="ico"><use href="#brush"/></svg><svg class="ico"><use href="#bolt"/></svg>
      <i class="sep"></i>
      <svg class="ico"><use href="#undo"/></svg><i class="drop"></i><svg class="ico"><use href="#redo"/></svg><i class="drop"></i>
      <i class="sep"></i>
      <svg class="ico"><use href="#pan"/></svg><svg class="ico"><use href="#zoomrt"/></svg><svg class="ico"><use href="#zoomwin"/></svg><svg class="ico"><use href="#zoomprev"/></svg>
      <i class="sep"></i>
      <svg class="ico"><use href="#props"/></svg><svg class="ico"><use href="#center"/></svg><svg class="ico"><use href="#palette"/></svg><svg class="ico"><use href="#sheets"/></svg><svg class="ico"><use href="#markup"/></svg><svg class="ico"><use href="#calc"/></svg>
      <i class="sep"></i>
      <svg class="ico"><use href="#help"/></svg>
    </div>
    <div class="bar bar-layers">
      <i class="grip"></i>
      <svg class="ico"><use href="#layers"/></svg>
      <div class="layer-select">
        <svg><use href="#bulb"/></svg><svg><use href="#sun"/></svg><svg><use href="#freeze"/></svg><svg><use href="#lock"/></svg><i class="swatch"></i><span>0</span>
        <svg class="chev" viewBox="0 0 8 6"><path d="m1 1 3 3 3-3" fill="none" stroke="#999"/></svg>
      </div>
      <svg class="ico"><use href="#layermake"/></svg><svg class="ico"><use href="#layerprev"/></svg>
    </div>
  </div>

  <div class="workspace">
    <div class="left">
      <div class="stage">
        <div class="vbar vbar-draw">
          <i class="vgrip"></i>
          <svg><use href="#line"/></svg><svg><use href="#xline"/></svg><svg><use href="#pline"/></svg><svg><use href="#polygon"/></svg><svg><use href="#rect"/></svg><svg><use href="#arc"/></svg><svg><use href="#circle"/></svg><svg><use href="#cloud"/></svg><svg><use href="#spline"/></svg><svg><use href="#ellipse"/></svg><svg><use href="#earc"/></svg><svg><use href="#insblock"/></svg><svg><use href="#mkblock"/></svg><svg><use href="#point"/></svg><svg><use href="#hatch"/></svg><svg><use href="#gradient"/></svg><svg><use href="#region"/></svg><svg><use href="#table"/></svg><svg><use href="#mtext"/></svg>
        </div>

        <!-- model space -->
        <div class="viewport">
          <svg class="model" viewBox="22 58 1050 553">
            <defs>
              <linearGradient id="body" x1="0" x2="1"><stop offset="0" stop-color="#a1a8b3"/><stop offset=".25" stop-color="#989fa8"/><stop offset=".65" stop-color="#888d96"/><stop offset="1" stop-color="#9299a4"/></linearGradient>
              <linearGradient id="faceL" x1="0" y1="0" x2="0" y2="1"><stop offset="0" stop-color="#939ba3"/><stop offset="1" stop-color="#9ca5ad"/></linearGradient>
              <linearGradient id="faceR" x1="0" y1="1" x2="1" y2="0"><stop offset="0" stop-color="#9ca4ad"/><stop offset="1" stop-color="#8c939c"/></linearGradient>
            </defs>
            <g stroke="#71777d" stroke-width=".9" stroke-linejoin="round">
              <path d="M351 268 440 216.500 493 172 545 201.500 634.500 253 480.500 342z" fill="#bfc4ce"/>
              <path d="M351 268 480.500 342V520.500L351 446z" fill="url(#faceL)"/>
              <path d="M634.500 253 480.500 342V520.500L634.500 432z" fill="url(#faceR)"/>
            </g>
            <path d="M438.500 262c0 16 24 29.500 54.500 29.500s54.500-13.500 54.500-29.500l-2-10H440z" fill="#bfc4ce" stroke="#777d85" stroke-width=".8"/>
            <path d="M440.500 92v174c5 15 27 25 52.500 25s47-9 52.500-25V92z" fill="url(#body)"/>
            <path d="M453.500 110v169M531.500 112v168" stroke="#727983"/>
            <path d="M489 260h8M493 256v8" stroke="#b2b7be" stroke-width=".6"/>
            <ellipse cx="493" cy="90" rx="54.500" ry="31.500" fill="#c3c8d3" stroke="#777d85" stroke-width=".9"/>
            <path d="M461.500 69 511.500 97" stroke="#9ba766"/>
            <path d="M527.500 69 478 97.500" stroke="#c23c60" stroke-width="1.200"/>
            <path d="M494.500 60v47" stroke="#7c4a92" stroke-width="1.200"/>

            <!-- UCS icon -->
            <path d="M66.500 567V545" stroke="#1a5c9e" stroke-width="3"/><path d="M66.500 532 61 546q5.500 3 11 0z" fill="#2288dd"/>
            <path d="M67 567 84 557.500" stroke="#27b02e" stroke-width="3"/><path d="m97 549-15 2 5 9z" fill="#0b9a10"/>
            <path d="M67 568 85 577" stroke="#bf2f31" stroke-width="3"/><path d="m97 584.500-15-3 4-8z" fill="#c7272b"/>
            <path d="M70.500 519h8l-8 8.500h8" fill="none" stroke="#4a92d4"/>
            <path d="m98.500 535 3.500 4 3.500-4M102 539v4.500" fill="none" stroke="#58c55a"/>
            <path d="m98 564 8.500 8.500M106.500 564 98 572.500" fill="none" stroke="#c64648"/>
          </svg>
          <div class="tip">Command:</div>
          <div class="dyn-input"><span>57</span></div>
        </div>

        <div class="vbar vbar-modify">
          <i class="vgrip"></i>
          <svg><use href="#erase"/></svg><svg><use href="#mcopy"/></svg><svg><use href="#mirror"/></svg><svg><use href="#offset"/></svg><svg><use href="#array"/></svg><svg><use href="#move"/></svg><svg><use href="#rotate"/></svg><svg><use href="#scale"/></svg><svg><use href="#stretch"/></svg><svg><use href="#trim"/></svg><svg><use href="#extend"/></svg><svg><use href="#breakpt"/></svg><svg><use href="#break"/></svg><svg><use href="#join"/></svg><svg><use href="#chamfer"/></svg><svg><use href="#fillet"/></svg><svg><use href="#explode"/></svg>
        </div>
      </div>

      <div class="command">
        <i class="grip"></i>
        <div class="cmd-box">
          <div class="cmd-history">1 Region created.</div>
          <div class="cmd-line"><svg class="cmd-scroll" viewBox="0 0 78 14"><path d="M15 0h63v14H15z" fill="#cdcdcd"/><path d="M0 0h15v14H0zM40 0h38v14H40z" fill="#f0f0f0"/><path d="M9 3 6 6l3 3" fill="none" stroke="#333" stroke-width="1.300"/></svg></div>
        </div>
      </div>
    </div>

    <div class="dashboard">
      <div class="dash-head"><b>&#8211;</b><i></i><b>&#215;</b></div>
      <div class="panels">
        <section class="panel panel-make">
          <svg class="p-icon"><use href="#p-solid"/></svg>
          <div class="row"><svg><use href="#polysolid"/></svg><svg><use href="#box"/></svg><svg><use href="#wedge"/></svg><svg><use href="#cone"/></svg><svg><use href="#sphere"/></svg><svg><use href="#cyl"/></svg><svg><use href="#pyramid"/></svg><svg><use href="#torus"/></svg></div>
          <div class="row"><svg><use href="#orbitaxis"/></svg><svg><use href="#orbit3"/></svg><i></i><svg><use href="#extrude"/></svg><svg><use href="#presspull"/></svg><svg><use href="#revolve"/></svg><svg><use href="#sweep"/></svg><svg><use href="#loft"/></svg><svg><use href="#planar"/></svg></div>
          <div class="row"><svg><use href="#helix"/></svg><i></i><svg><use href="#union"/></svg><svg><use href="#subtract"/></svg><svg><use href="#intersect"/></svg><i></i><svg><use href="#slice"/></svg><svg><use href="#thicken"/></svg></div>
        </section>
        <section class="panel panel-nav">
          <svg class="p-icon"><use href="#p-nav"/></svg>
          <div class="row"><svg><use href="#pan"/></svg><svg><use href="#zoomrt"/></svg><i></i><svg><use href="#orbit"/></svg><svg><use href="#swivel"/></svg><svg><use href="#walk"/></svg><i></i><svg><use href="#camera"/></svg><i></i><svg class="on"><use href="#parallel"/></svg><svg><use href="#persp"/></svg></div>
          <div class="row field"><svg><use href="#back"/></svg><div class="combo"><span>Unsaved Current View</span></div></div>
        </section>
        <section class="panel panel-style">
          <svg class="p-icon"><use href="#p-style"/></svg>
          <div class="row"><svg><use href="#xray"/></svg><svg><use href="#realball"/></svg><svg><use href="#facecol"/></svg><i></i><svg><use href="#edges"/></svg><svg><use href="#vsman"/></svg></div>
          <div class="row field"><div class="combo"><span>Realistic</span></div></div>
        </section>
        <section class="panel panel-light">
          <svg class="p-icon"><use href="#p-light"/></svg>
          <div class="row"><svg><use href="#lightoff"/></svg><svg><use href="#sunoff"/></svg><svg><use href="#lightlist"/></svg></div>
          <div class="row field"><svg><use href="#calendar"/></svg><div class="slider"></div><div class="value">9/21/202</div></div>
          <div class="row field"><svg><use href="#clock"/></svg><div class="slider"></div><div class="value">3:00 PM</div></div>
        </section>
        <section class="panel panel-mat">
          <svg class="p-icon"><use href="#p-mat"/></svg>
          <div class="row"><svg><use href="#matball"/></svg><svg><use href="#matmap"/></svg><i></i><svg><use href="#matlayer"/></svg><svg><use href="#matlist"/></svg></div>
        </section>
        <section class="panel panel-render">
          <svg class="p-icon"><use href="#p-render"/></svg>
          <div class="row"><svg><use href="#teapot"/></svg><svg><use href="#rframe"/></svg></div>
          <div class="row field"><div class="combo"><span class="picked">Medium</span></div></div>
          <div class="row field"><svg><use href="#stop"/></svg><div class="progress"><i></i><i></i><i></i></div></div>
        </section>
      </div>
    </div>
  </div>

  <div class="status">
    <div class="coords">90,&nbsp; 34 , 0</div>
    <div class="modes">
      <span>SNAP</span><span>GRID</span><span>ORTHO</span><span>POLAR</span><span class="down">OSNAP</span><span class="down">OTRACK</span><span class="down">DUCS</span><span class="down">DYN</span><span>LWT</span>
    </div>
    <svg class="status-icons" viewBox="0 0 50 16"><path d="M.5 1.500h15v13H.5z" fill="#8b8d84" stroke="#333"/><path d="M3 4h10v8H3z" fill="#393c38"/><path d="M4 6h8M6 9h6M8 4v8" stroke="#a9ada0"/><path d="M21 1.500h13v12H21z" fill="#ccd5dd"/><path d="M22 3h11v9M23 12l9-8M22 7h10M26 3v9" stroke="#7b93a8" fill="none"/><path d="M35 15V1M48 15V1M20 14.500h15M40 14.500h8" stroke="#aaa"/><path d="M41 7l4-5v5zM41 9h4v5z"/></svg>
    <svg class="status-tray" viewBox="0 0 70 18"><path d="M.5 18V3.500h34" fill="none" stroke="#aaa"/><path d="m3 7 6-3M5 12l8-8" stroke="#667" stroke-width="1.500"/><path d="m10 5 5 9H5z" fill="#f6de2d" stroke="#776a14"/><path d="M10 8v3M10 12v1" stroke="#000" stroke-width="1.300"/><path d="M19 7h9v7h-9z" fill="#ba9e20" stroke="#4d420c"/><path d="M25 7V4q3-3 5 0v3" fill="none" stroke="#80701d" stroke-width="1.800"/><path d="M23 9v3" stroke="#222" stroke-width="2"/><path d="M41 12h6l-3 3z"/><path d="M55.500 3.500h12v11h-12z" fill="#7fb0d9" stroke="#275b87"/><path d="M58 6h7v6h-7z" fill="#b7dbf6"/></svg>
  </div>

  <div class="taskbar">
    <div class="start"><svg><use href="#win"/></svg></div>
    <div class="search">Search the web and Windows</div>
    <div class="apps">
      <div class="task"><svg class="i16"><use href="#taskview"/></svg></div>
      <div class="task"><svg class="i16"><use href="#edge"/></svg></div>
      <div class="task open"><svg class="i18"><use href="#folder"/></svg></div>
      <div class="task"><svg class="i20"><use href="#store"/></svg></div>
      <div class="task"><svg class="i18"><use href="#firefox"/></svg></div>
      <div class="task open"><svg class="i18"><use href="#chrome"/></svg></div>
      <div class="task open"><svg class="i18"><use href="#zoomapp"/></svg></div>
      <div class="task active"><svg class="i20"><use href="#acadbig"/></svg></div>
    </div>
    <svg class="tray" viewBox="0 0 75 20"><g fill="none" stroke="#e8e8e8" stroke-width="1.100"><path d="m3 12 4.500-4.500L12 12M23 5.500h10v7H23zM21 5h3v4h-3zM22 9v6h4M28 13v2M25 15.500h7M41 8h2l3-3v10l-3-3h-2zM48 7.500q2 2.500 0 5M50 6q3 4 0 8"/></g><path d="M60 4.500h12v9h-4v3l-3-3h-5z" fill="#fff"/><path d="M62 7.500h8M62 10.500h6" stroke="#111"/></svg>
    <div class="clock"><span>3:27 PM</span><span>3/24/2021</span></div>
  </div>

  <!-- notification balloon -->
  <div class="balloon">
    <svg class="balloon-shape" viewBox="0 0 236 80"><path d="M10.500.5h215l5 3 4 6.500v40l-4 6.500-5 3H180.500V75L166 59.500H10.500l-6-3-4-6.500V10l4-6.500z" fill="#ffffe1" stroke="#000" stroke-width="1.200"/></svg>
    <div class="balloon-body">
      <div class="balloon-head"><svg><use href="#info"/></svg><strong>Communication Center</strong><span class="balloon-close"><svg viewBox="0 0 8 8"><path d="m1 1 6 6M7 1 1 7" stroke="#000" stroke-width="1.700"/></svg></span></div>
      <p>The easy way to keep you and your software up-to-date.</p>
      <a>Click here.</a>
    </div>
  </div>

</body>
</html>
```
FILE: styles.css
```
* {
  box-sizing: border-box;
}

html, body {
  margin: 0;
  padding: 0;
}

body {
  position: relative;
  width: 1280px;
  height: 720px;
  overflow: hidden;
  display: flex;
  flex-direction: column;
  background: #f0f0f0;
  font-family: "Noto Sans", "Open Sans", sans-serif;
  font-size: 10px;
  color: #1a1a1a;
  white-space: nowrap;
}

svg {
  display: block;
  flex: none;
}

.sprite {
  position: absolute;
  width: 0;
  height: 0;
}

/* title + menu */
.titlebar {
  height: 18px;
  display: flex;
  align-items: center;
  padding-left: 2px;
  background: #fff;
}

.app-icon {
  width: 12px;
  height: 12px;
}

.title {
  margin-left: 4px;
  font-size: 9.8px;
  letter-spacing: -0.35px;
}

.win-buttons {
  width: 100px;
  height: 18px;
  margin-left: auto;
}

.menubar {
  height: 16px;
  display: flex;
  align-items: center;
  padding-left: 6px;
  background: #fff;
}

.doc-icon {
  width: 13px;
  height: 13px;
}

.menu {
  display: flex;
  gap: 11.3px;
  margin-left: 5px;
  font-size: 9.6px;
  letter-spacing: -0.35px;
}

.mdi-buttons {
  width: 46px;
  height: 14px;
  margin-left: auto;
}

/* horizontal toolbars */
.toolbars {
  height: 23px;
  display: flex;
  border-top: 1px solid #e6e6e6;
}

.bar {
  height: 22px;
  display: flex;
  align-items: center;
  border-right: 1px solid #a8a8a8;
  border-bottom: 1px solid #bbb;
  background: linear-gradient(#fbfbfb, #ececec);
}

.bar-workspace {
  width: 191px;
  padding-left: 2px;
}

.bar-standard {
  width: 522px;
  padding-left: 4px;
}

.bar-layers {
  width: 311px;
  padding-left: 4px;
}

.grip {
  width: 5px;
  height: 18px;
  border-left: 1px solid #999;
  border-right: 1px solid #999;
  flex: none;
}

.ico {
  width: 16px;
  height: 16px;
  margin: 0 1.2px;
}

.bar-standard .grip + .ico {
  margin-left: 3px;
}

.bar-layers .grip + .ico {
  margin-left: 4px;
}

.sep {
  width: 1px;
  height: 14px;
  margin: 0 1.8px;
  background: #555;
}

.drop {
  margin: 0 2px 0 1px;
  border: 2.5px solid transparent;
  border-top: 3px solid #bbb;
  border-bottom: 0;
  width: 5px;
}

.drop + .ico {
  margin-left: 3.5px;
}

.drop + .sep {
  margin-left: 4px;
}

.ws-select {
  width: 139px;
  height: 17px;
  margin: 0 1px 0 3px;
  padding: 0 3px 0 6px;
  display: flex;
  align-items: center;
  justify-content: space-between;
  border: 1px solid #e2e2e2;
  color: #888;
  letter-spacing: -0.5px;
  background: linear-gradient(90deg, #f0f0f0 124px, #fff 124px);
}

.chev {
  width: 8px;
  height: 6px;
}

.layer-select {
  width: 240px;
  height: 18px;
  padding: 0 2px 0 3px;
  display: flex;
  align-items: center;
  border: 1px solid #ddd;
  background: linear-gradient(90deg, #f0f0f0 225px, #fff 225px);
}

.layer-select svg {
  width: 12px;
  height: 12px;
  margin-right: 1px;
}

.layer-select .chev {
  width: 8px;
  height: 6px;
  margin-left: auto;
}

.swatch {
  width: 9px;
  height: 9px;
  border: 1px solid #222;
  background: #fff;
  margin-right: 3px;
}

.layer-select span {
  color: #666;
}

/* main area */
.workspace {
  height: 612px;
  display: flex;
}

.left {
  width: 1100px;
  display: flex;
  flex-direction: column;
  border-right: 1px solid #888;
}

.stage {
  height: 561px;
  display: flex;
  border-bottom: 1px solid #777;
}

.vbar {
  width: 17px;
  display: flex;
  flex-direction: column;
  align-items: center;
  border-right: 1px solid #bbb;
  border-bottom: 1px solid #bbb;
  background: #f7f7f7;
}

.vbar svg {
  width: 14px;
  height: 14px;
  margin: 1.8px 0;
}

.vbar-draw {
  height: 348px;
  margin-left: 2px;
}

.vbar-modify {
  width: 20px;
  height: 313px;
  margin-left: 2px;
}

.vgrip {
  width: 15px;
  height: 5px;
  margin: 2px 0 1px;
  border-top: 1px solid #aaa;
  border-bottom: 1px solid #aaa;
  flex: none;
}

.viewport {
  position: relative;
  width: 1052px;
  height: 555px;
  margin-left: 2px;
  border: 1px solid #555;
  border-left-color: #777;
  border-top: 1px solid #777;
  background: #c0c0c0;
}

.model {
  width: 1050px;
  height: 553px;
}

.tip {
  position: absolute;
  left: 484px;
  top: 44px;
  width: 60px;
  height: 17px;
  padding-left: 4px;
  border: 1px solid #4a4a7c;
  background: #cfcde8;
  color: #33335c;
  line-height: 15px;
  letter-spacing: -0.35px;
}

.dyn-input {
  position: absolute;
  left: 431px;
  top: 94px;
  width: 22px;
  height: 16px;
  padding: 1px 0 0 3px;
  border: 1px solid #333;
  background: #fff;
  line-height: 12px;
}

.dyn-input span {
  display: inline-block;
  background: #2f8be0;
  color: #fff;
  letter-spacing: -0.6px;
}

/* command window */
.command {
  flex: 1;
  display: flex;
  padding: 8px 0 0 6px;
  border-bottom: 1px solid #ccc;
}

.command .grip {
  width: 4px;
  height: 39px;
}

.cmd-box {
  flex: 1;
  margin-left: 3px;
  border-top: 2px solid #777;
  border-left: 1px solid #777;
  background: #fff;
}

.cmd-history {
  height: 25px;
  border-bottom: 1px solid #999;
  padding-left: 1px;
  font: 10.5px/12px "Liberation Mono", monospace;
}

.cmd-scroll {
  width: 78px;
  height: 14px;
  margin-left: auto;
}

/* dashboard */
.dashboard {
  flex: 1;
  padding: 1px 1px 0 2px;
  border-top: 1px solid #aaa;
}

.dash-head {
  height: 15px;
  display: flex;
  align-items: center;
  gap: 4px;
  padding: 0 4px;
}

.dash-head b {
  width: 8px;
  height: 8px;
  background: #fff;
  border: 1px solid #ccc;
  font-size: 9px;
  line-height: 5px;
  text-align: center;
}

.dash-head i {
  flex: 1;
  height: 4px;
  border: 1px solid #aaa;
}

.panels {
  border: 1px solid #b5b5b5;
}

.panel {
  position: relative;
  display: flex;
  flex-direction: column;
  padding: 2px 3px 0 0;
  border-bottom: 1px solid #b5b5b5;
  background: linear-gradient(90deg, #d9d9d9 17px, #efefef 17px);
}

.panel:last-child {
  border-bottom: 0;
}

.panel-make { height: 64px; padding-top: 1px; }
.panel-nav { height: 46px; }
.panel-style { height: 46px; }
.panel-light { height: 65px; }
.panel-mat { height: 26px; }
.panel-render { height: 65px; padding-top: 1px; }

/* category icon overlaps the strip at the left edge */
.p-icon {
  position: absolute;
  left: 3px;
  top: 3px;
  width: 18px;
  height: 18px;
}

.row {
  height: 20px;
  display: flex;
  align-items: center;
  justify-content: flex-end;
}

.panel-light .field {
  height: 19.5px;
}

.row svg {
  width: 15px;
  height: 15px;
  margin: 0 1.3px;
}

.row > i {
  width: 1px;
  height: 17px;
  margin: 0 .7px;
  background: #555;
}

.row .on {
  background: #fbbf77;
  outline: 1px solid #e8b27a;
}

.field svg {
  width: 13px;
  height: 13px;
  margin-right: 3px;
}

.combo {
  width: 131px;
  height: 17px;
  display: flex;
  align-items: center;
  padding-left: 3px;
  border: 1px solid #9eb3b8;
  background: linear-gradient(90deg, #fff 118px, #9a9a9a 118px, #9a9a9a 119px, #fff 119px);
  letter-spacing: -0.5px;
}

.combo::after {
  content: "";
  width: 5px;
  height: 5px;
  margin: -3px 3px 0 auto;
  border: solid #111;
  border-width: 0 1.5px 1.5px 0;
  transform: rotate(45deg);
}

.picked {
  background: #338fe8;
  color: #fff;
  line-height: 12px;
  letter-spacing: -0.2px;
}

.slider {
  width: 86px;
  height: 13px;
  border: 1px solid #abc0c0;
  background: linear-gradient(transparent 5px, #8fabab 5px, #8fabab 6px, transparent 6px);
}

.value {
  width: 42px;
  height: 16px;
  margin-left: 3px;
  padding-left: 2px;
  border: 1px solid #abc0c0;
  color: #777;
  line-height: 14px;
  letter-spacing: -0.6px;
}

.progress {
  width: 131px;
  height: 13px;
  display: flex;
  align-items: flex-end;
  justify-content: space-evenly;
  border: 1px solid #abc0c0;
}

.progress i {
  width: 1px;
  height: 2px;
  background: #aaa;
}

/* status bar */
.status {
  height: 19px;
  display: flex;
  align-items: center;
  padding: 4px 0 0 4px;
  font-family: "Liberation Sans", Arial, sans-serif;
  font-size: 10px;
}

.coords {
  width: 72px;
  height: 14px;
  border: 1px solid #bbb;
  border-right-color: #999;
  line-height: 13px;
}

.modes {
  display: flex;
  gap: 3px;
  margin-left: 4px;
}

.modes span {
  height: 14px;
  line-height: 14px;
  text-align: center;
  border-right: 1px solid #aaa;
  border-bottom: 1px solid #bbb;
  letter-spacing: -0.5px;
}

.modes .down {
  border: 0;
  border-left: 1px solid #333;
  border-top: 1px solid #333;
}

.modes span:nth-child(1) { width: 26px; }
.modes span:nth-child(2) { width: 25px; }
.modes span:nth-child(3) { width: 35px; }
.modes span:nth-child(4) { width: 31px; }
.modes span:nth-child(5) { width: 33px; }
.modes span:nth-child(6) { width: 39px; }
.modes span:nth-child(7) { width: 27px; }
.modes span:nth-child(8) { width: 23px; }
.modes span:nth-child(9) { width: 22px; }

.status-icons {
  width: 50px;
  height: 16px;
  margin-left: 3px;
}

.status-tray {
  width: 70px;
  height: 18px;
  margin-left: auto;
}

/* taskbar */
.taskbar {
  height: 32px;
  display: flex;
  align-items: center;
  background: #04070a;
  color: #eee;
}

.start {
  width: 39px;
  display: flex;
  justify-content: center;
}

.start svg {
  width: 14px;
  height: 14px;
}

.search {
  width: 275px;
  height: 32px;
  padding-left: 9px;
  background: #333;
  color: #999;
  font-size: 12px;
  line-height: 32px;
  letter-spacing: -0.35px;
}

.apps {
  display: flex;
}

.task {
  width: 39.2px;
  height: 32px;
  display: flex;
  align-items: center;
  justify-content: center;
}

.open {
  background: linear-gradient(#76b9ed, #76b9ed) center bottom / 32px 2px no-repeat;
}

.active {
  background: #333b41;
  border-bottom: 2px solid #76b9ed;
}

.i16 {
  width: 16px;
  height: 16px;
}

.i18 {
  width: 18px;
  height: 18px;
}

.i20 {
  width: 20px;
  height: 20px;
}

.tray {
  width: 75px;
  height: 20px;
  margin-left: auto;
}

.clock {
  width: 60px;
  height: 32px;
  margin-right: 2px;
  display: flex;
  flex-direction: column;
  align-items: center;
  justify-content: center;
  border-right: 1px solid #444;
  font-size: 10px;
  line-height: 13px;
  letter-spacing: -0.5px;
}

/* balloon */
.balloon {
  position: absolute;
  left: 1040px;
  top: 604px;
  width: 236px;
  height: 80px;
  font-family: "Liberation Sans", Arial, sans-serif;
  font-size: 9.5px;
}

.balloon-shape {
  position: absolute;
  left: 0;
  top: 0;
  width: 236px;
  height: 80px;
}

.balloon-body {
  position: relative;
  padding: 5px 8px 0 12px;
}

.balloon-head {
  height: 16px;
  display: flex;
  align-items: center;
  margin-left: -5px;
}

.balloon-head svg {
  width: 13px;
  height: 13px;
}

.balloon-head strong {
  margin-left: 7px;
  font-size: 10px;
  letter-spacing: -0.4px;
}

.balloon-close {
  width: 13px;
  height: 13px;
  margin-left: auto;
  padding: 2px;
  border: 1px solid #999;
  background: #f4f4e8;
}

.balloon-head .balloon-close svg {
  width: 7px;
  height: 7px;
}

.balloon p {
  margin: 3px 0 4px;
  line-height: 12px;
  letter-spacing: -0.49px;
}

.balloon a {
  display: block;
  color: #2222c8;
  line-height: 11px;
  text-decoration: underline;
  letter-spacing: -0.45px;
}
```
